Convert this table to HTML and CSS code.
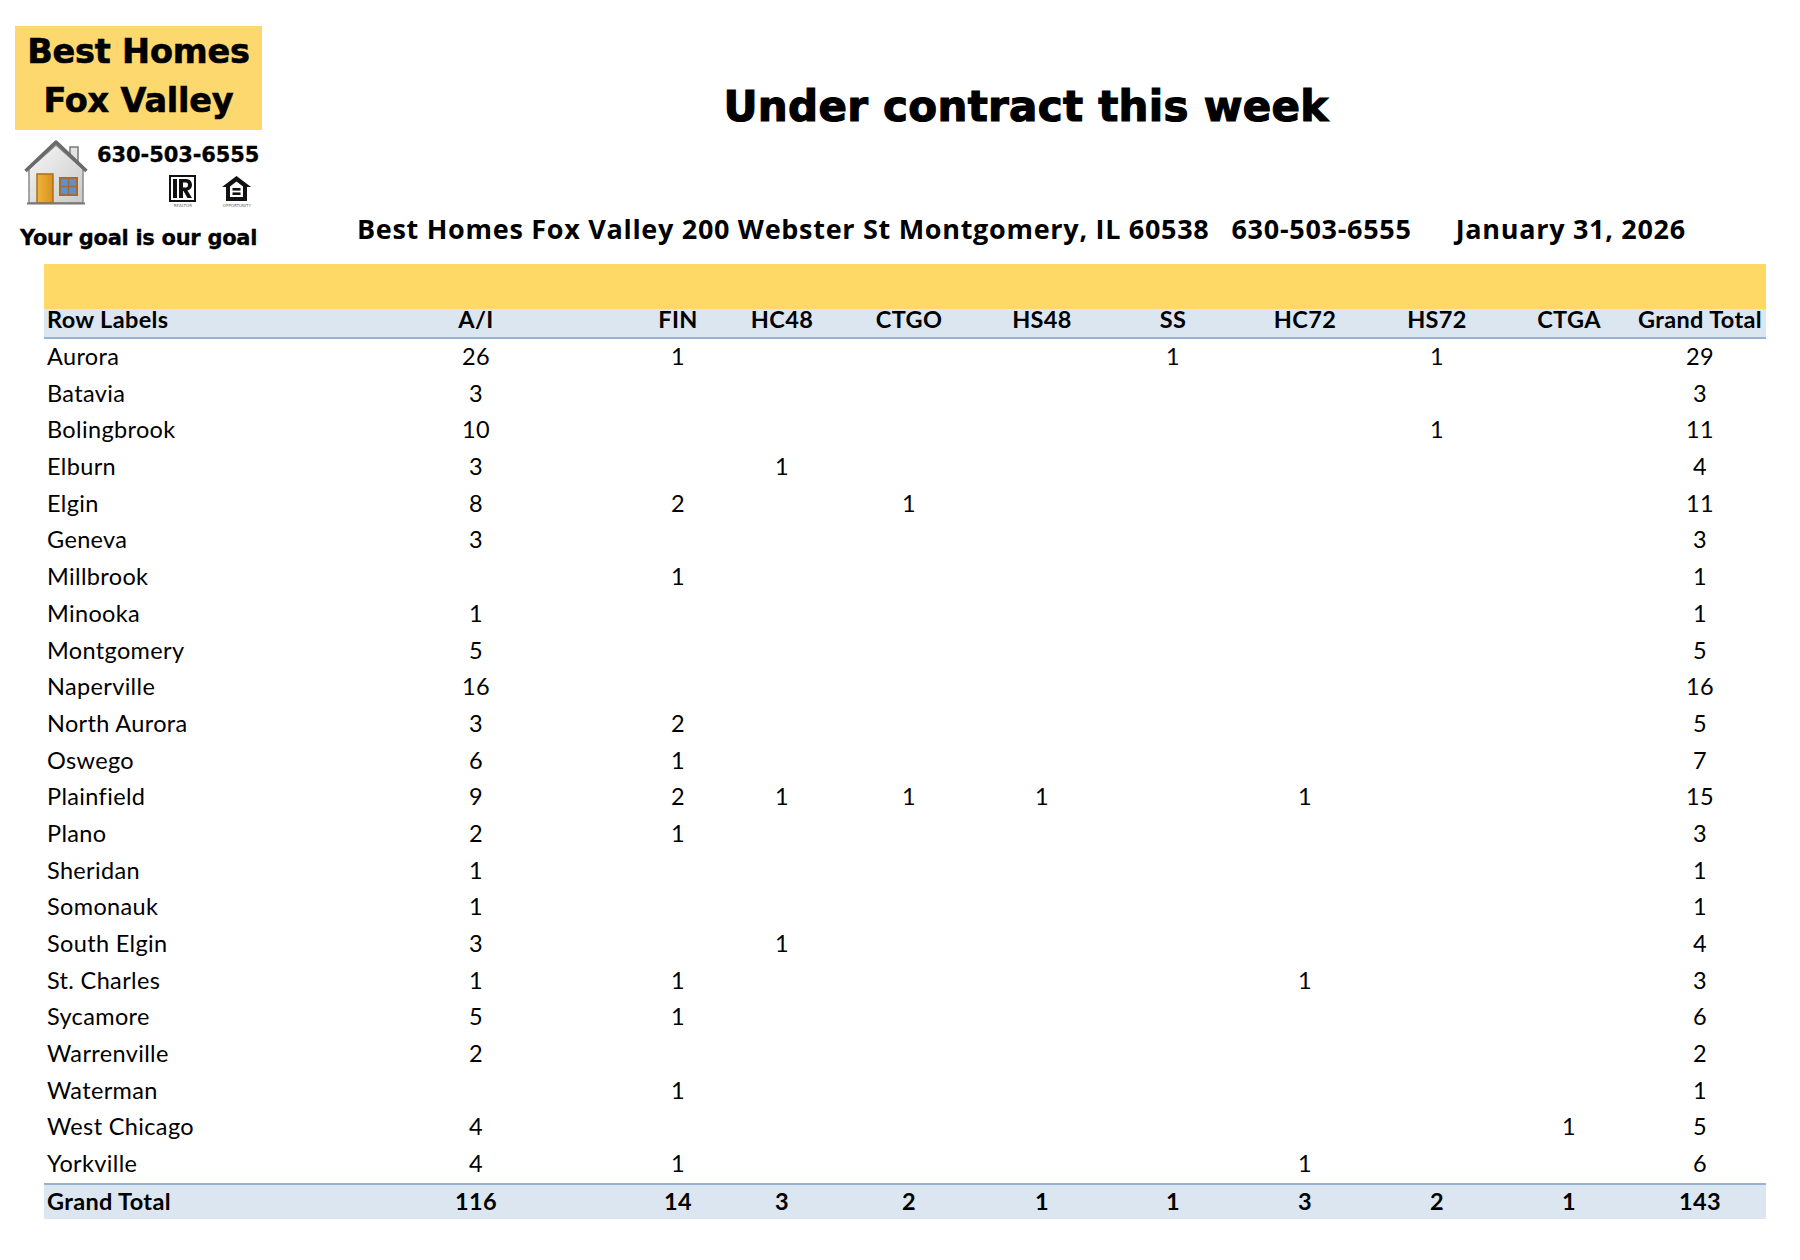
FILE: index.html
```html
<!DOCTYPE html>
<html>
<head>
<meta charset="utf-8">
<title>Under contract this week</title>
<link rel="stylesheet" href="styles.css">
</head>
<body>
<div class="page">
  <div class="header">
    <div class="logo">
      <div class="logo-box">
        <div class="logo-name">Best Homes</div>
        <div class="logo-name">Fox Valley</div>
      </div>
      <div class="logo-mid">
        <svg class="house" width="64" height="66" viewBox="0 0 64 66">
          <defs>
            <linearGradient id="wall" x1="0" y1="0" x2="1" y2="1">
              <stop offset="0" stop-color="#f7f7f7"/>
              <stop offset="1" stop-color="#c9c9c9"/>
            </linearGradient>
            <linearGradient id="door" x1="0" y1="0" x2="1" y2="0">
              <stop offset="0" stop-color="#f0b440"/>
              <stop offset="1" stop-color="#d8901c"/>
            </linearGradient>
          </defs>
          <rect x="46" y="8" width="8" height="16" fill="#e4e4e4" stroke="#7a7a7a" stroke-width="1.5"/>
          <path d="M5 30 L32 6 L59 30 L59 64 L5 64 Z" fill="url(#wall)" stroke="#8a8a8a" stroke-width="1.5"/>
          <path d="M1.5 32 L32 3 L62.5 32" fill="none" stroke="#6a6a6a" stroke-width="3.5" stroke-linejoin="round"/>
          <rect x="13" y="35" width="16" height="29" fill="url(#door)" stroke="#a8701e" stroke-width="1.5"/>
          <rect x="36" y="39" width="17" height="17" fill="#5c90d4" stroke="#a36c2c" stroke-width="2"/>
          <path d="M44.5 39 V56 M36 47.5 H53" stroke="#a36c2c" stroke-width="1.5"/>
          <path d="M3 64.5 H61" stroke="#777" stroke-width="2"/>
        </svg>
        <div class="logo-side">
          <div class="logo-phone">630-503-6555</div>
          <div class="logo-icons">
            <div class="mark mark-r">
              <svg width="27" height="27" viewBox="0 0 27 27">
                <rect x="1" y="1" width="25" height="25" fill="#fff" stroke="#111" stroke-width="2"/>
                <path d="M4 4 H8 V23 H4 Z" fill="#111"/>
                <path d="M10 4 H17 C22 4 23 8 23 10 C23 13 21 15 18.5 15.5 L23 23 H18.5 L14.5 16 H14 V23 H10 Z M14 7.5 V12.5 H17 C18.5 12.5 19 11.5 19 10 C19 8.5 18.5 7.5 17 7.5 Z" fill="#111" fill-rule="evenodd"/>
              </svg>
              <span class="mark-text">REALTOR</span>
            </div>
            <div class="mark mark-e">
              <svg width="31" height="27" viewBox="0 0 31 27">
                <path d="M15.5 1 L1 12 H5 V26 H26 V12 H30 Z" fill="#111"/>
                <path d="M15.5 6.5 L9 11.5 V22 H22 V11.5 Z" fill="#fff"/>
                <rect x="11.5" y="13" width="8" height="2.6" fill="#111"/>
                <rect x="11.5" y="17.4" width="8" height="2.6" fill="#111"/>
              </svg>
              <span class="mark-text">OPPORTUNITY</span>
            </div>
          </div>
        </div>
      </div>
      <div class="logo-tag">Your goal is our goal</div>
    </div>
    <div class="heading">
      <h1 class="title">Under contract this week</h1>
      <div class="subtitle"><span>Best Homes Fox Valley 200 Webster St Montgomery, IL 60538</span><span class="sub-phone">630-503-6555</span><span class="sub-date">January 31, 2026</span></div>
    </div>
  </div>

  <div class="table">
    <div class="band"></div>
    <div class="row head">
      <div class="label">Row Labels</div><div>A/I</div><div>FIN</div><div>HC48</div><div>CTGO</div><div>HS48</div><div>SS</div><div>HC72</div><div>HS72</div><div>CTGA</div><div>Grand Total</div>
    </div>
    <div class="body">
      <div class="row"><div class="label">Aurora</div><div>26</div><div>1</div><div></div><div></div><div></div><div>1</div><div></div><div>1</div><div></div><div>29</div></div>
      <div class="row"><div class="label">Batavia</div><div>3</div><div></div><div></div><div></div><div></div><div></div><div></div><div></div><div></div><div>3</div></div>
      <div class="row"><div class="label">Bolingbrook</div><div>10</div><div></div><div></div><div></div><div></div><div></div><div></div><div>1</div><div></div><div>11</div></div>
      <div class="row"><div class="label">Elburn</div><div>3</div><div></div><div>1</div><div></div><div></div><div></div><div></div><div></div><div></div><div>4</div></div>
      <div class="row"><div class="label">Elgin</div><div>8</div><div>2</div><div></div><div>1</div><div></div><div></div><div></div><div></div><div></div><div>11</div></div>
      <div class="row"><div class="label">Geneva</div><div>3</div><div></div><div></div><div></div><div></div><div></div><div></div><div></div><div></div><div>3</div></div>
      <div class="row"><div class="label">Millbrook</div><div></div><div>1</div><div></div><div></div><div></div><div></div><div></div><div></div><div></div><div>1</div></div>
      <div class="row"><div class="label">Minooka</div><div>1</div><div></div><div></div><div></div><div></div><div></div><div></div><div></div><div></div><div>1</div></div>
      <div class="row"><div class="label">Montgomery</div><div>5</div><div></div><div></div><div></div><div></div><div></div><div></div><div></div><div></div><div>5</div></div>
      <div class="row"><div class="label">Naperville</div><div>16</div><div></div><div></div><div></div><div></div><div></div><div></div><div></div><div></div><div>16</div></div>
      <div class="row"><div class="label">North Aurora</div><div>3</div><div>2</div><div></div><div></div><div></div><div></div><div></div><div></div><div></div><div>5</div></div>
      <div class="row"><div class="label">Oswego</div><div>6</div><div>1</div><div></div><div></div><div></div><div></div><div></div><div></div><div></div><div>7</div></div>
      <div class="row"><div class="label">Plainfield</div><div>9</div><div>2</div><div>1</div><div>1</div><div>1</div><div></div><div>1</div><div></div><div></div><div>15</div></div>
      <div class="row"><div class="label">Plano</div><div>2</div><div>1</div><div></div><div></div><div></div><div></div><div></div><div></div><div></div><div>3</div></div>
      <div class="row"><div class="label">Sheridan</div><div>1</div><div></div><div></div><div></div><div></div><div></div><div></div><div></div><div></div><div>1</div></div>
      <div class="row"><div class="label">Somonauk</div><div>1</div><div></div><div></div><div></div><div></div><div></div><div></div><div></div><div></div><div>1</div></div>
      <div class="row"><div class="label">South Elgin</div><div>3</div><div></div><div>1</div><div></div><div></div><div></div><div></div><div></div><div></div><div>4</div></div>
      <div class="row"><div class="label">St. Charles</div><div>1</div><div>1</div><div></div><div></div><div></div><div></div><div>1</div><div></div><div></div><div>3</div></div>
      <div class="row"><div class="label">Sycamore</div><div>5</div><div>1</div><div></div><div></div><div></div><div></div><div></div><div></div><div></div><div>6</div></div>
      <div class="row"><div class="label">Warrenville</div><div>2</div><div></div><div></div><div></div><div></div><div></div><div></div><div></div><div></div><div>2</div></div>
      <div class="row"><div class="label">Waterman</div><div></div><div>1</div><div></div><div></div><div></div><div></div><div></div><div></div><div></div><div>1</div></div>
      <div class="row"><div class="label">West Chicago</div><div>4</div><div></div><div></div><div></div><div></div><div></div><div></div><div></div><div>1</div><div>5</div></div>
      <div class="row"><div class="label">Yorkville</div><div>4</div><div>1</div><div></div><div></div><div></div><div></div><div>1</div><div></div><div></div><div>6</div></div>
    </div>
    <div class="row total">
      <div class="label">Grand Total</div><div>116</div><div>14</div><div>3</div><div>2</div><div>1</div><div>1</div><div>3</div><div>2</div><div>1</div><div>143</div>
    </div>
  </div>
</div>
</body>
</html>
```

FILE: styles.css
```css
* { box-sizing: border-box; }
html, body { margin: 0; padding: 0; background: #fff; }
body { font-family: Lato, "Open Sans", sans-serif; color: #000; }

.page { width: 1800px; height: 1260px; }

.header { display: flex; height: 264px; }

.logo { width: 263px; padding: 26px 0 0 15px; display: flex; flex-direction: column; }
.logo-box {
  width: 247px; height: 104px; background: #fdd86f;
  padding-top: 1px; text-align: center;
  font-family: "DejaVu Sans", sans-serif; font-weight: bold;
}
.logo-name { font-size: 33.5px; line-height: 49px; letter-spacing: -0.2px; -webkit-text-stroke: 0.6px #000; }

.logo-mid { display: flex; margin-top: 9px; height: 76px; }
.house { margin-left: 9px; flex: none; }
.logo-side { display: flex; flex-direction: column; margin-left: 9px; }
.logo-phone {
  font-family: "DejaVu Sans", sans-serif; font-weight: bold;
  font-size: 21px; line-height: 24px; margin-top: 4px; letter-spacing: -0.1px;
  -webkit-text-stroke: 0.3px #000;
}
.logo-icons { display: flex; justify-content: flex-end; align-items: flex-end; gap: 25px; margin-top: 8px; padding-right: 7px; }
.mark { display: flex; flex-direction: column; align-items: center; }
.mark-text { font-family: "DejaVu Sans", sans-serif; font-size: 4px; line-height: 5px; color: #666; margin-top: 1px; }

.logo-tag {
  font-family: "DejaVu Sans", sans-serif; font-weight: bold;
  font-size: 21px; line-height: 24px; margin-top: 11px; margin-left: 5px; letter-spacing: -0.3px;
  -webkit-text-stroke: 0.3px #000;
}

.heading { flex: 1; padding-top: 82px; }
.title {
  margin: 0; text-align: center;
  font-family: "DejaVu Sans", sans-serif; font-weight: bold;
  font-size: 42px; line-height: 50px; letter-spacing: 0.3px;
  -webkit-text-stroke: 1.2px #000;
  padding-right: 11px;
}
.subtitle {
  margin-top: 80px; padding-left: 94px;
  font-family: "Open Sans", Lato, sans-serif;
  font-weight: bold; font-size: 27px; line-height: 33px; white-space: nowrap;
  display: flex; letter-spacing: 0.7px;
}
.sub-phone { margin-left: 22px; }
.sub-date { margin-left: 44px; }

.table { margin-left: 44px; width: 1722px; }
.band { height: 45px; background: #ffd966; }
.row {
  display: grid;
  grid-template-columns: 276px 312px 92px 116px 138px 128px 134px 130px 134px 130px 132px;
  font-size: 23.5px; letter-spacing: 0.35px; text-align: center; white-space: nowrap;
}
.row .label { text-align: left; padding-left: 3px; }
.head {
  height: 30px; line-height: 20px; font-weight: bold;
  background: #dce6f1; border-bottom: 2px solid #95b3d7;
}
.body .row { height: 36.7px; line-height: 35.5px; }
.total {
  height: 36px; line-height: 33px; font-weight: bold;
  background: #dce6f1; border-top: 2px solid #95b3d7;
}
```
